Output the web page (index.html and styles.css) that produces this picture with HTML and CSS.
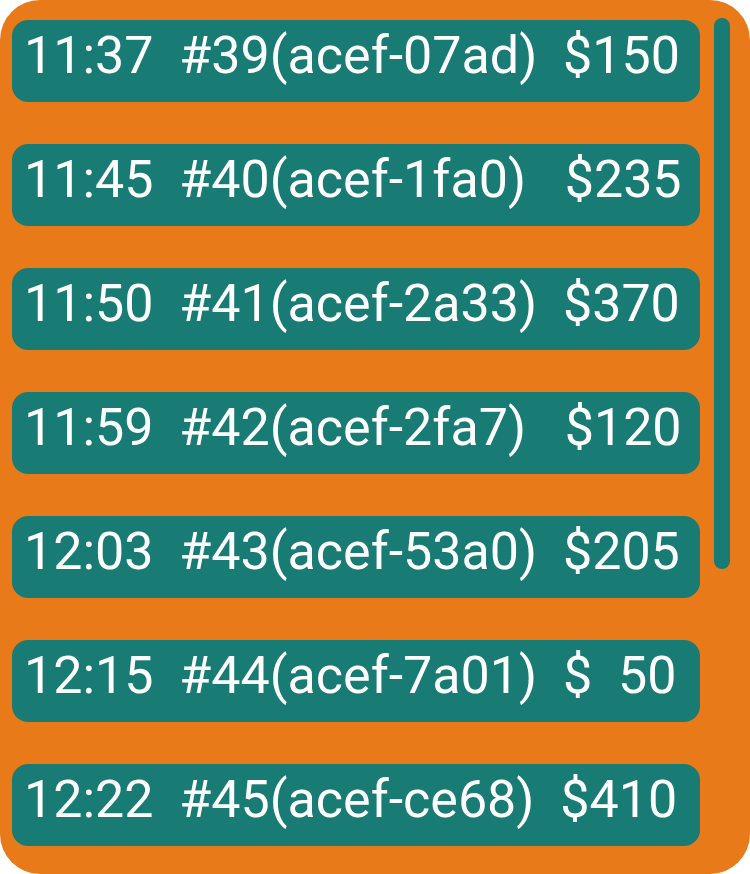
FILE: index.html
```html
<!DOCTYPE html>
<html>
<head>
<meta charset="utf-8">
<link rel="stylesheet" href="styles.css">
</head>
<body>
<div class="panel">
  <ul class="list">
    <li class="row">11:37  #39(acef-07ad)  $150</li>
    <li class="row">11:45  #40(acef-1fa0)   $235</li>
    <li class="row">11:50  #41(acef-2a33)  $370</li>
    <li class="row">11:59  #42(acef-2fa7)   $120</li>
    <li class="row">12:03  #43(acef-53a0)  $205</li>
    <li class="row">12:15  #44(acef-7a01)  $  50</li>
    <li class="row">12:22  #45(acef-ce68)  $410</li>
  </ul>
  <div class="scrollbar"></div>
</div>
</body>
</html>
```
FILE: styles.css
```css
html, body {
  margin: 0;
  padding: 0;
  background: #ffffff;
}
.panel {
  width: 750px;
  height: 874px;
  box-sizing: border-box;
  background: #E87A1A;
  border-radius: 40px;
  display: flex;
  align-items: flex-start;
  padding: 20px 0 0 12px;
  overflow: hidden;
}
.list {
  list-style: none;
  margin: 0;
  padding: 0;
  width: 688px;
  display: flex;
  flex-direction: column;
  gap: 42px;
}
.row {
  height: 82px;
  box-sizing: border-box;
  background: #187B74;
  border-radius: 16px;
  color: #ffffff;
  font-family: Roboto, "Liberation Sans", sans-serif;
  font-size: 52px;
  line-height: 72px;
  padding: 0 0 10px 12px;
  white-space: pre;
}
.scrollbar {
  width: 16px;
  height: 551px;
  margin: -2px 0 0 14px;
  background: #187B74;
  border-radius: 8px;
}
```
